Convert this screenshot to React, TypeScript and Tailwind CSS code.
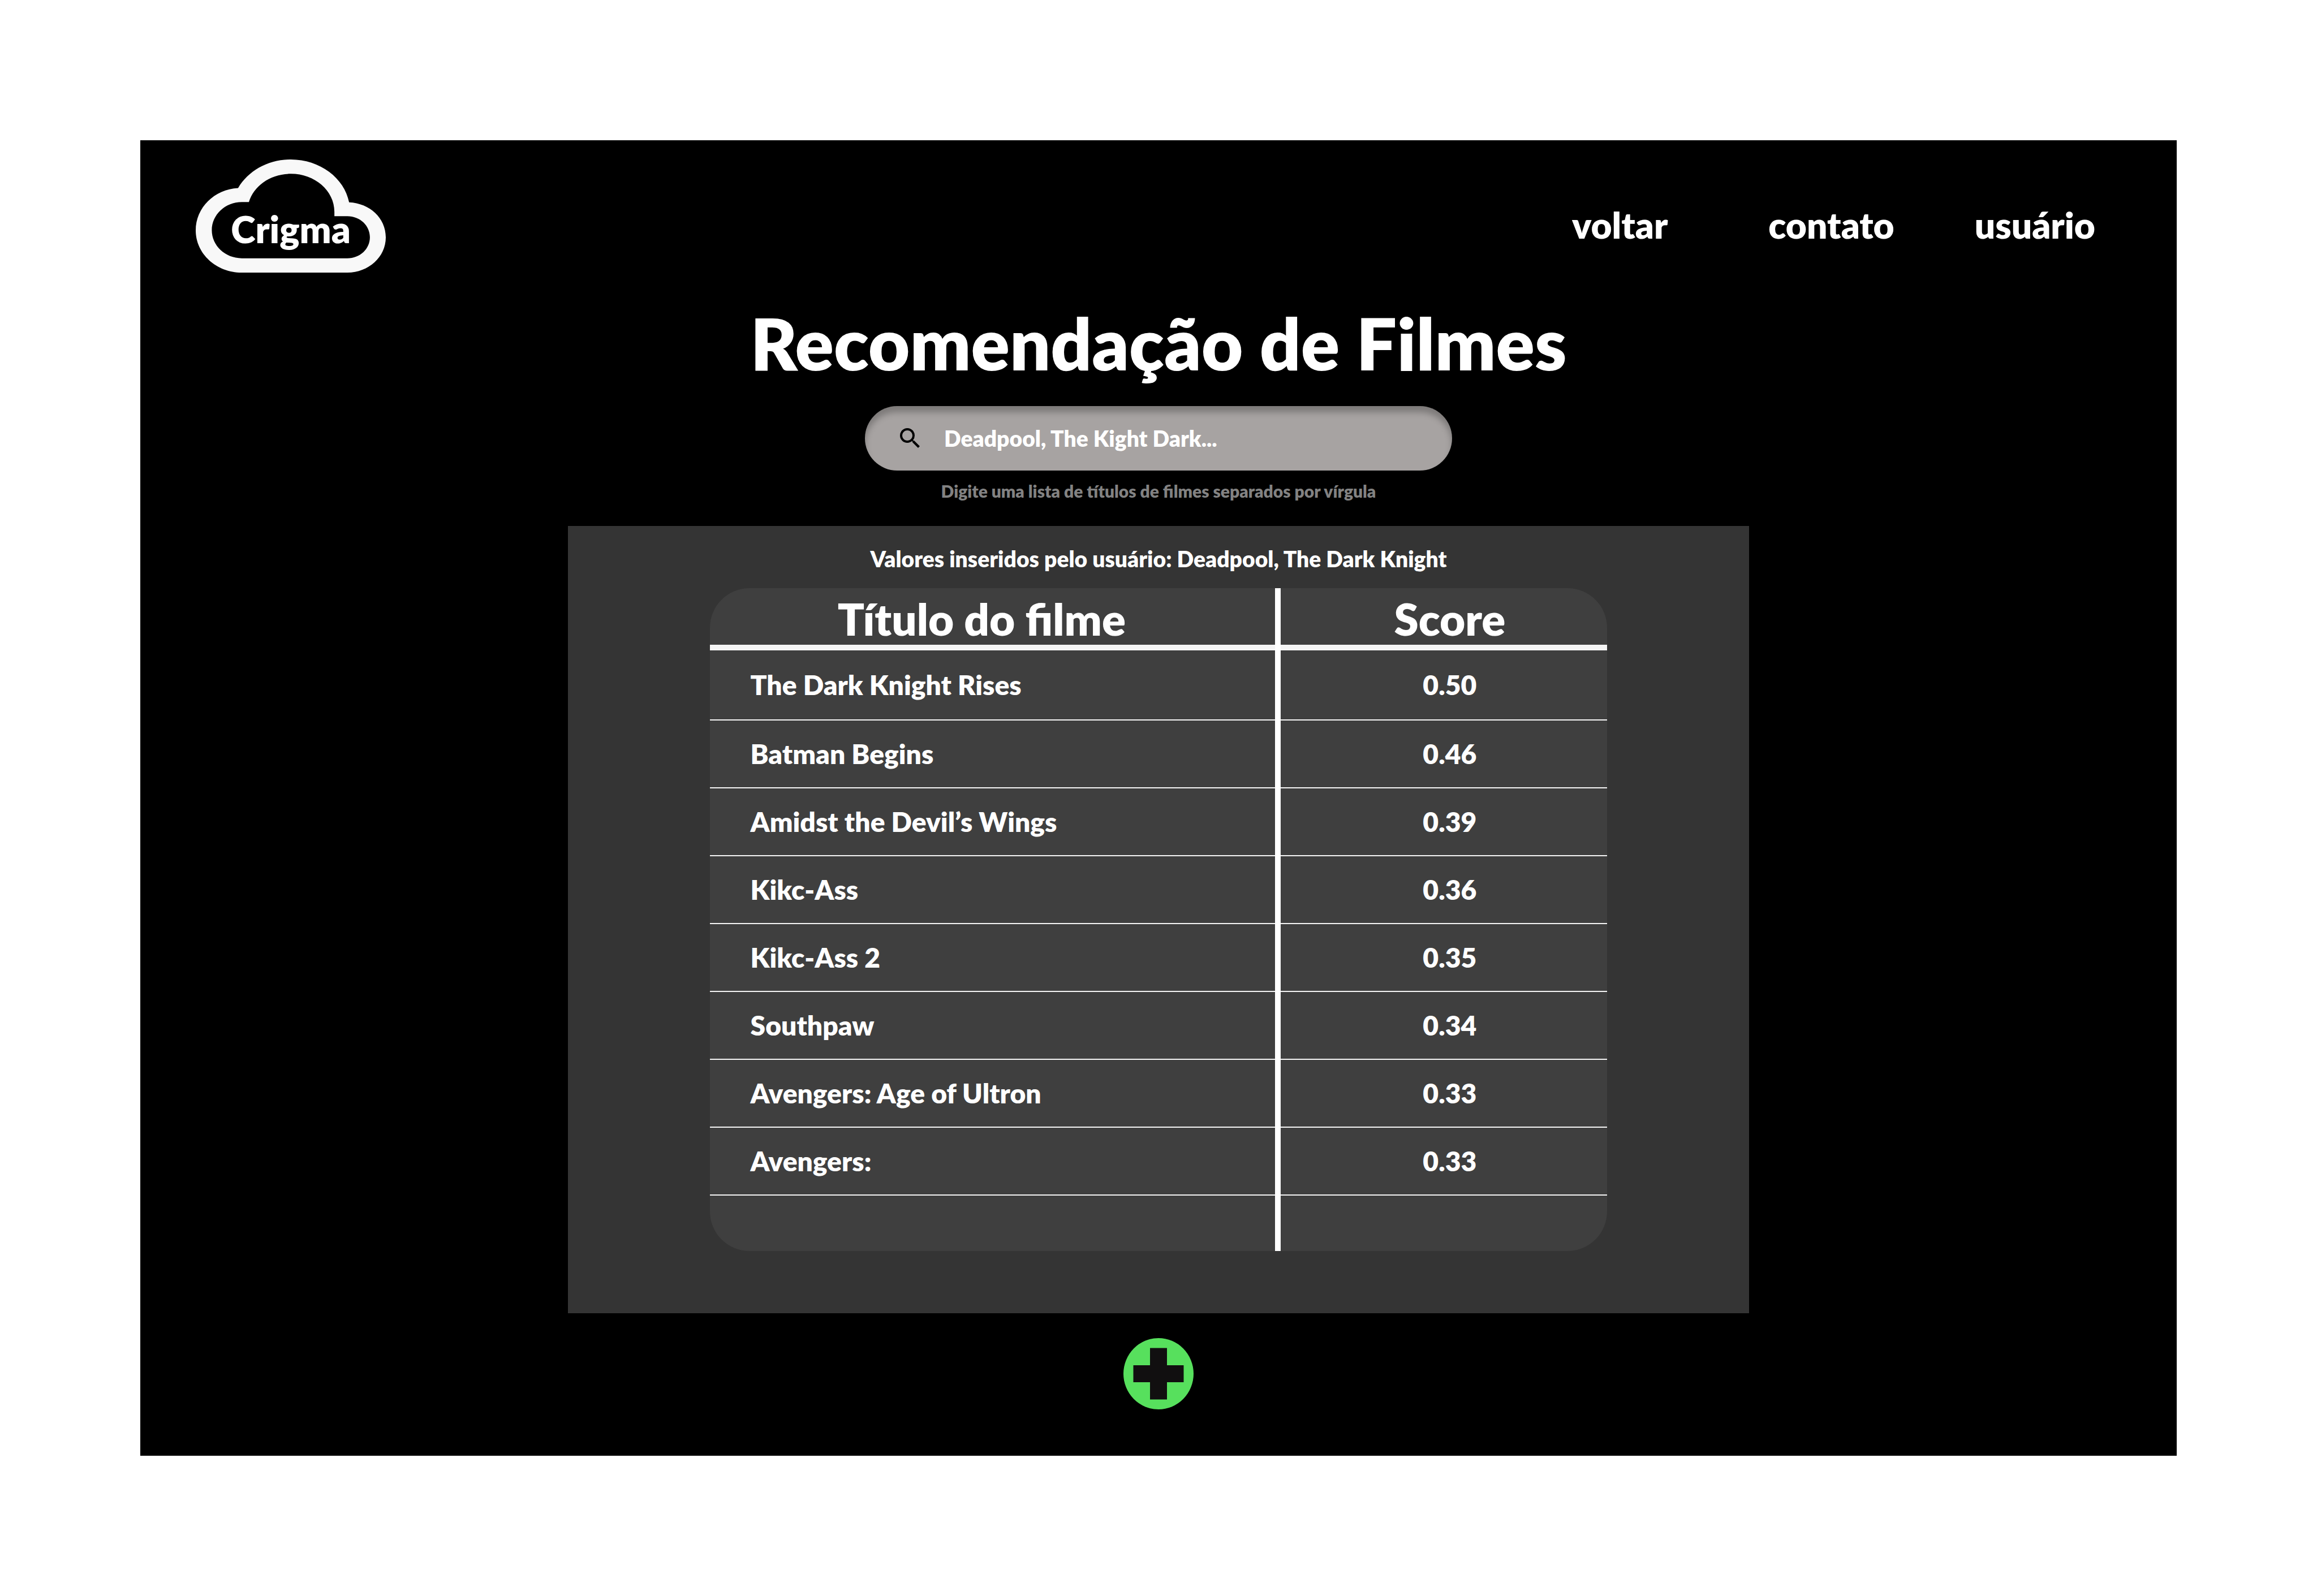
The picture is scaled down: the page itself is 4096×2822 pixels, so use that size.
import { MdSearch } from "react-icons/md";

const links = [
  { label: "voltar", className: "mr-9" },
  { label: "contato", className: "" },
  { label: "usuário", className: "" },
];

const movies = [
  { title: "The Dark Knight Rises", score: "0.50" },
  { title: "Batman Begins", score: "0.46" },
  { title: "Amidst the Devil’s Wings", score: "0.39" },
  { title: "Kikc-Ass", score: "0.36" },
  { title: "Kikc-Ass 2", score: "0.35" },
  { title: "Southpaw", score: "0.34" },
  { title: "Avengers: Age of Ultron", score: "0.33" },
  { title: "Avengers:", score: "0.33" },
];

function Logo() {
  return (
    <a href="#" className="relative block h-[200px] w-[336px]">
      <svg
        viewBox="330 155 969 617"
        preserveAspectRatio="none"
        className="h-full w-full"
        aria-hidden="true"
      >
        <path
          fill="#f8f8f8"
          fillRule="evenodd"
          d="M565 772C435 772 330 669 330 542C330 418 425 318 546 311C598 216 700 155 815 155C963 155 1088 256 1112 389C1217 394 1299 475 1299 580C1299 686 1212 772 1103 772ZM565 694H1103C1167 694 1218 643 1218 579C1218 515 1167 464 1103 464H1037V440C1037 325 937 233 815 233C713 233 626 297 601 387H565C480 387 412 456 412 541C412 625 480 694 565 694Z"
        />
      </svg>
      <span className="absolute inset-x-0 top-20 text-center text-[66px] leading-[86px]">
        Crigma
      </span>
    </a>
  );
}

function SearchBar() {
  return (
    <div className="mt-8 flex flex-col items-center">
      <div className="flex h-[114px] w-[1038px] items-center rounded-full bg-[#a7a3a2] pr-14 pl-14 shadow-[inset_0_11px_11px_rgba(0,0,0,0.25)]">
        <MdSearch className="size-12 shrink-0 text-black" aria-hidden="true" />
        <input
          type="text"
          aria-label="Títulos de filmes"
          aria-describedby="search-hint"
          placeholder="Deadpool, The Kight Dark..."
          className="ml-9 min-w-0 flex-1 bg-transparent text-[39px] leading-[56px] font-extrabold text-white outline-none placeholder:text-white placeholder:opacity-100"
        />
      </div>
      <p id="search-hint" className="mt-4 text-[30px] leading-[40px] text-[#828282]">
        Digite uma lista de títulos de filmes separados por vírgula
      </p>
    </div>
  );
}

function ScoreTable() {
  return (
    <div className="relative mt-6 w-[76%] overflow-hidden rounded-[70px] bg-[#3f3f3f]">
      <table className="w-full table-fixed border-separate border-spacing-0">
        <thead>
          <tr className="text-[78px] leading-[92px]">
            <th className="h-[110px] w-[63%] border-b-[10px] border-[#f5f5f5] p-0 pt-2 pr-[38px] text-center font-extrabold">
              Título do filme
            </th>
            <th className="h-[110px] border-b-[10px] border-[#f5f5f5] p-0 pt-2 pl-[30px] text-center font-extrabold">
              Score
            </th>
          </tr>
        </thead>
        <tbody className="text-[48px] leading-[56px]">
          {movies.map((movie, index) => (
            <tr key={movie.title} className={index === 0 ? "h-[124px]" : "h-[120px]"}>
              <td className="border-b-2 border-[#f5f5f5] p-0 pl-[72px]">{movie.title}</td>
              <td className="border-b-2 border-[#f5f5f5] p-0 pl-[30px] text-center">
                {movie.score}
              </td>
            </tr>
          ))}
          <tr className="h-[98px]">
            <td className="p-0" />
            <td className="p-0" />
          </tr>
        </tbody>
      </table>
      <div className="absolute inset-y-0 left-[63%] w-[10px] bg-white" />
    </div>
  );
}

export default function App() {
  return (
    <div className="flex min-h-screen flex-col bg-white p-[248px] font-['Lato',sans-serif] font-extrabold text-white">
      <div className="flex flex-1 flex-col bg-black pb-20">
        <header className="flex items-center justify-between pt-[34px] pr-36 pl-[98px]">
          <Logo />
          <nav className="flex gap-[142px] pt-8 text-[64px] leading-[80px]">
            {links.map((link) => (
              <a key={link.label} href="#" className={link.className}>
                {link.label}
              </a>
            ))}
          </nav>
        </header>
        <main className="flex flex-col items-center">
          <h1 className="mt-11 text-[127px] leading-[160px]">Recomendação de Filmes</h1>
          <SearchBar />
          <section className="mt-[42px] flex w-[58%] flex-col items-center bg-[#343434] pt-[30px] pb-[110px]">
            <p className="text-[39px] leading-[56px]">
              Valores inseridos pelo usuário: Deadpool, The Dark Knight
            </p>
            <ScoreTable />
          </section>
          <button type="button" aria-label="Adicionar" className="mt-11">
            <svg
              viewBox="0 0 124 126"
              className="h-[126px] w-[124px]"
              aria-hidden="true"
            >
              <ellipse cx="62" cy="63" rx="62" ry="63" fill="#57e05d" />
              <path
                fill="#110f10"
                d="M47 17.5H77V48H106.5V78H77V108.5H47V78H17.5V48H47Z"
              />
            </svg>
          </button>
        </main>
      </div>
    </div>
  );
}
